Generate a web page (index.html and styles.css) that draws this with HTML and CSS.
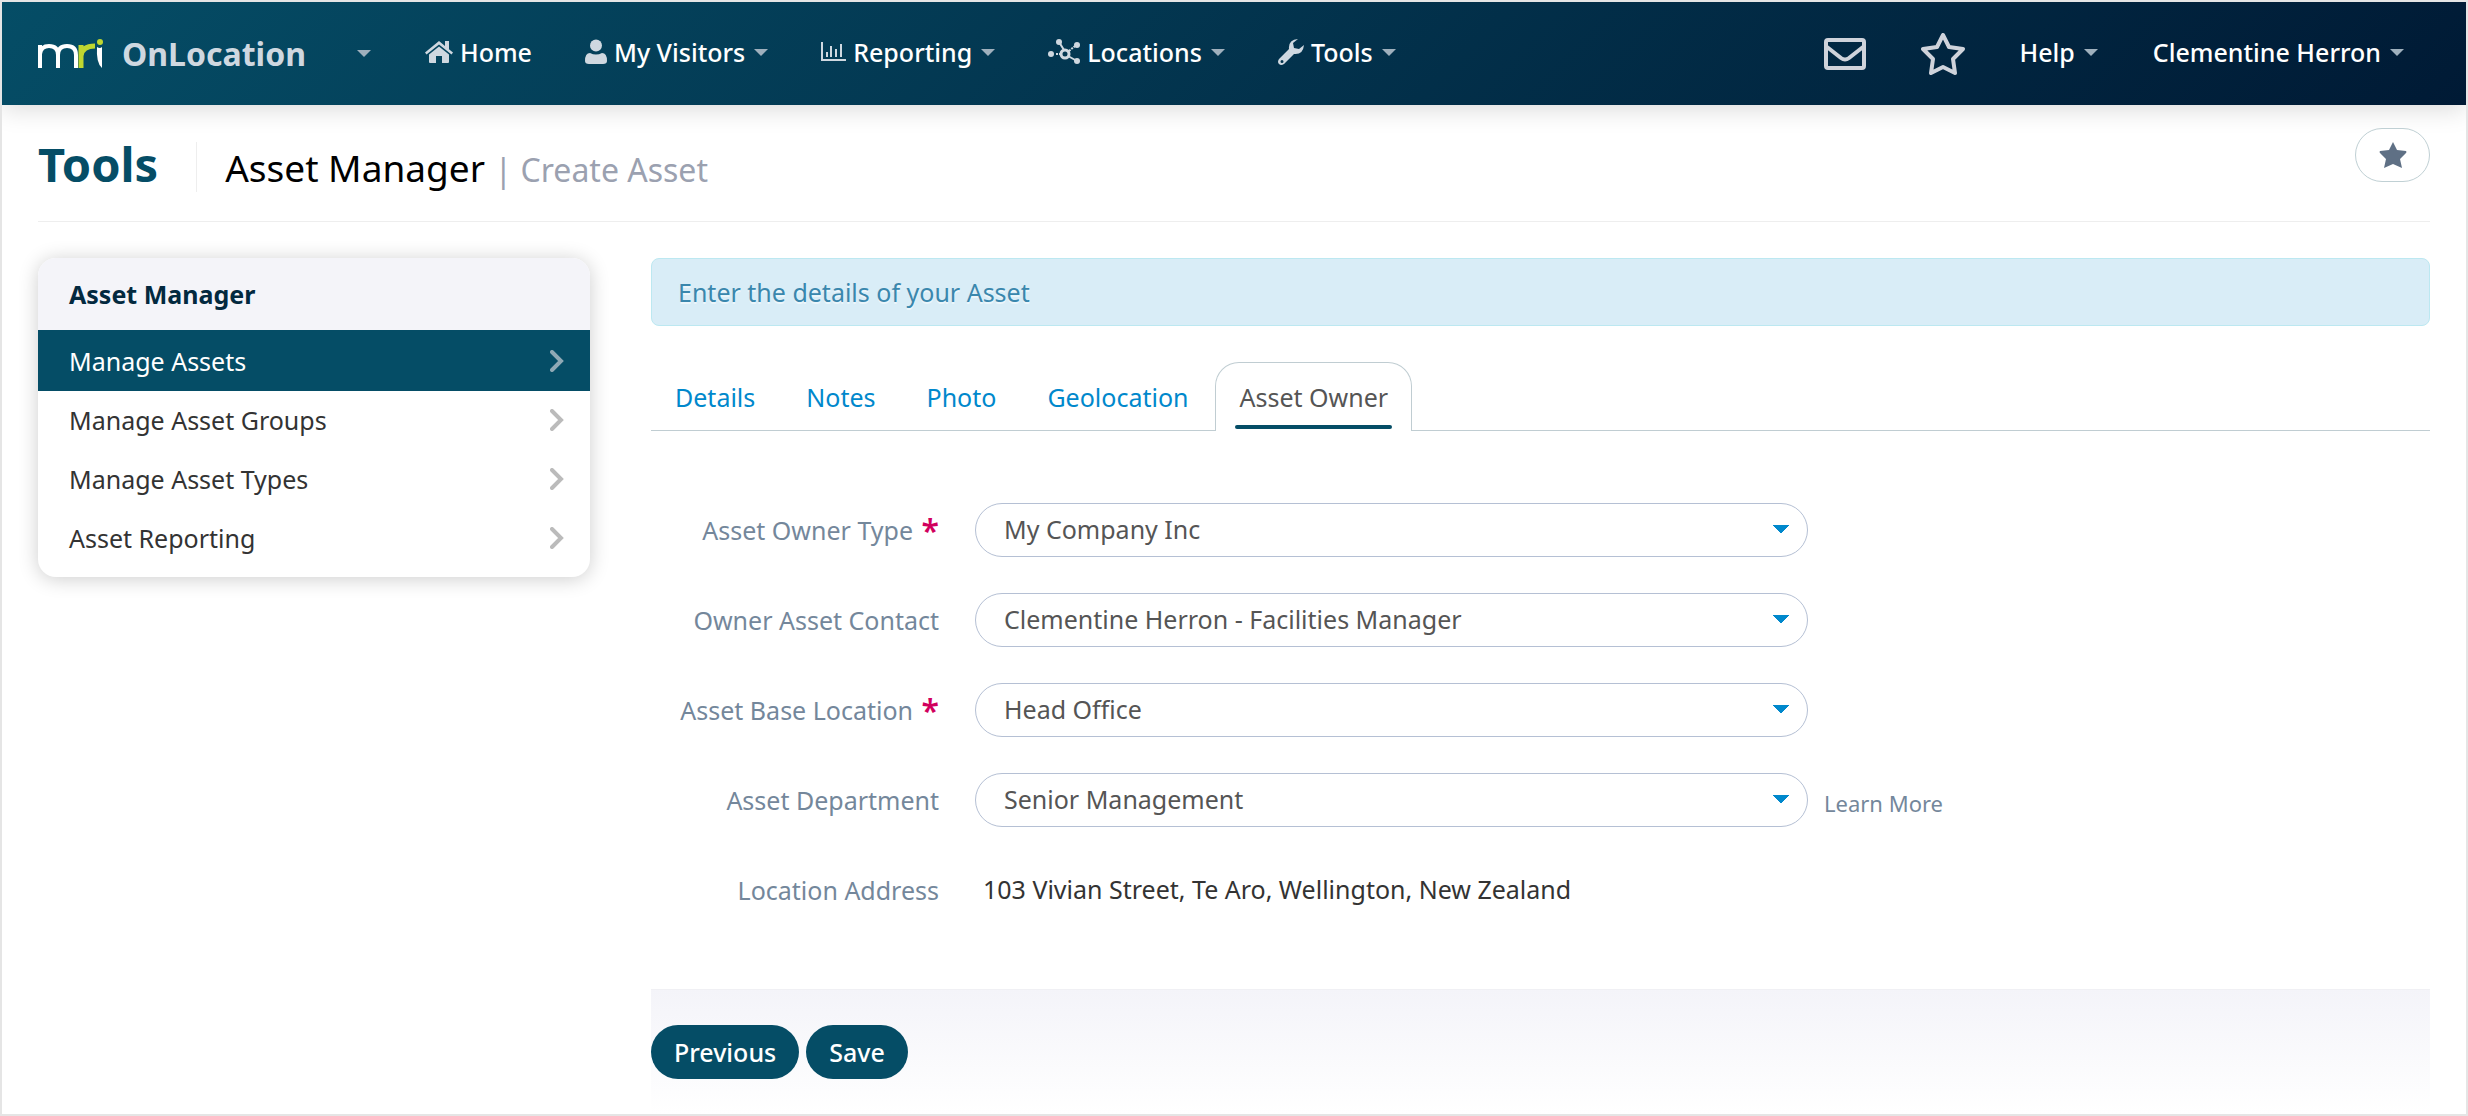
FILE: index.html
```html
<!DOCTYPE html>
<html lang="en">
<head>
  <meta charset="UTF-8">
  <meta name="viewport" content="width=device-width, initial-scale=1.0">
  <title>Asset Manager - Create Asset</title>
  <link rel="stylesheet" href="styles.css">
</head>
<body>
  <!-- Top navigation -->
  <header class="navbar">
    <a href="#" class="brand">
      <svg class="logo" viewBox="0 0 66 30" aria-label="mri">
        <path d="M2 29V6M2 29V15Q3 7 11 7Q20 7 20 16V29M20 16Q20 7 29 7Q38 7 38 16V29" fill="none" stroke="#fff" stroke-width="4"/>
        <path d="M43 29V6M43 29V17Q44 7 57 7" fill="none" stroke="#bfd730" stroke-width="5"/>
        <path d="M59 8Q62 10 64 8V29Q58 24 59 8z" fill="#fff"/>
        <circle cx="62" cy="3" r="3" fill="#bfd730"/>
      </svg>
      <span>OnLocation</span>
    </a>
    <button class="caret-button" aria-label="Switch product"><span class="caret"></span></button>
    <nav class="menu">
      <a href="#">
        <svg class="icon icon-home" viewBox="0 0 28 24"><path d="M14 1L0 12.500l1.500 2L14 4.500l12.500 10 1.500-2-4-3.300V1h-4v5zM14 6.500L4 14.500V22q0 1 1 1h6v-7h6v7h6q1 0 1-1v-7.500z"/></svg>
        Home
      </a>
      <a href="#">
        <svg class="icon" viewBox="0 0 22 26"><circle cx="11" cy="6.500" r="6"/><path d="M0 22q0-8 5-8 6 3 12 0 5 0 5 8 0 3-4 3H4q-4 0-4-3z"/></svg>
        My Visitors <span class="caret"></span>
      </a>
      <a href="#">
        <svg class="icon icon-chart" viewBox="0 0 25 20"><path d="M0 0h2v17h23v2H0zM5 10h2v5H5zM9 4h2v11H9zM14 7h2v8h-2zM19 2h2v13h-2z"/></svg>
        Reporting <span class="caret"></span>
      </a>
      <a href="#">
        <svg class="icon icon-hub" viewBox="0 0 32 26"><circle cx="17" cy="15" r="4" fill="none" stroke="#cfd8e0" stroke-width="3"/><circle cx="11" cy="3" r="3"/><circle cx="29" cy="6" r="3"/><circle cx="3" cy="15" r="3"/><circle cx="29" cy="22" r="3"/><path d="M11 3l5 8M20 17l9 5" stroke="#cfd8e0" stroke-width="2"/><path d="M8 15h5M21 12l6-5" stroke="#cfd8e0" stroke-width="2" stroke-dasharray="2 1"/></svg>
        Locations <span class="caret"></span>
      </a>
      <a href="#">
        <svg class="icon" viewBox="0 0 26 26"><path fill-rule="evenodd" d="M20 0q-10 1-9 10L1 20q-2 3 0 5 2 2 5 0L16 15q9 1 10-9l-5 4-5-1-1-5zM4 21a1 1 0 1 0 0 3 1 1 0 0 0 0-3z"/></svg>
        Tools <span class="caret"></span>
      </a>
    </nav>
    <div class="user-menu">
      <a href="#" aria-label="Messages">
        <svg class="icon-mail" viewBox="0 0 42 32"><rect x="2" y="2" width="38" height="28" rx="2"/><path d="M3 9l14 11q4 3 8 0L39 9"/></svg>
      </a>
      <a href="#" aria-label="Favourites">
        <svg class="icon-star" viewBox="0 0 44 42"><path d="M22 2l6 12 14 2-10 10 2 14-12-6-12 6 2-14L2 16l14-2z"/></svg>
      </a>
      <a href="#" class="user-link">Help <span class="caret"></span></a>
      <a href="#" class="user-link">Clementine Herron <span class="caret"></span></a>
    </div>
  </header>

  <div class="page">
    <div class="page-header">
      <h1>Tools</h1>
      <h2>Asset Manager <small>| Create Asset</small></h2>
      <button class="favourite" aria-label="Add to favourites">
        <svg viewBox="0 0 28 26"><path d="M14 0l4 8 9 1q1 1 0 2l-6 6 2 9-9-4-9 4 2-9-6-6q-1-1 0-2l9-1z"/></svg>
      </button>
    </div>

    <div class="columns">
      <!-- Side menu -->
      <aside class="sidebar">
        <h3>Asset Manager</h3>
        <a href="#" class="active">Manage Assets <svg viewBox="0 0 14 22"><path d="M2 2l9 9-9 9"/></svg></a>
        <a href="#">Manage Asset Groups <svg viewBox="0 0 14 22"><path d="M2 2l9 9-9 9"/></svg></a>
        <a href="#">Manage Asset Types <svg viewBox="0 0 14 22"><path d="M2 2l9 9-9 9"/></svg></a>
        <a href="#">Asset Reporting <svg viewBox="0 0 14 22"><path d="M2 2l9 9-9 9"/></svg></a>
      </aside>

      <main class="content">
        <div class="alert">Enter the details of your Asset</div>

        <nav class="tabs">
          <a href="#">Details</a>
          <a href="#">Notes</a>
          <a href="#">Photo</a>
          <a href="#">Geolocation</a>
          <a href="#" class="active">Asset Owner</a>
        </nav>

        <form>
          <div class="form-group">
            <label for="owner-type">Asset Owner Type <span class="required">*</span></label>
            <select id="owner-type"><option>My Company Inc</option></select>
          </div>
          <div class="form-group">
            <label for="contact">Owner Asset Contact</label>
            <select id="contact"><option>Clementine Herron - Facilities Manager</option></select>
          </div>
          <div class="form-group">
            <label for="location">Asset Base Location <span class="required">*</span></label>
            <select id="location"><option>Head Office</option></select>
          </div>
          <div class="form-group">
            <label for="department">Asset Department</label>
            <select id="department"><option>Senior Management</option></select>
            <a href="#" class="learn-more">Learn More</a>
          </div>
          <div class="form-group">
            <label for="address">Location Address</label>
            <output id="address">103 Vivian Street, Te Aro, Wellington, New Zealand</output>
          </div>
          <div class="form-actions">
            <button type="button">Previous</button>
            <button type="submit">Save</button>
          </div>
        </form>
      </main>
    </div>
  </div>
</body>
</html>
```
FILE: styles.css
```css
* {
  box-sizing: border-box;
}
body {
  margin: 0;
  min-height: 100vh;
  border: 2px solid #e5e5e5;
  background-color: #fff;
  font-family: "Noto Sans", sans-serif;
  font-size: 25px;
  line-height: 36px;
  color: #333;
}
a {
  text-decoration: none;
}
button, select {
  font-family: inherit;
  font-size: inherit;
}

/* navbar */
.navbar {
  display: flex;
  align-items: center;
  height: 103px;
  padding: 0 62px 0 36px;
  background: linear-gradient(135deg, #054d66, #001a35);
  box-shadow: 0 4px 24px rgba(0, 0, 0, 0.15);
}
.navbar a {
  display: flex;
  align-items: center;
  color: #fff;
  font-weight: 500;
  white-space: nowrap;
}
.navbar .brand {
  gap: 18px;
  color: #cfd8e0;
  font-size: 32px;
  font-weight: bold;
}
.logo {
  width: 66px;
  height: 30px;
}
.caret {
  margin-left: 9px;
  border: 7px solid transparent;
  border-top: 7px solid #9fb0bd;
  border-bottom: 0;
}
.caret-button {
  display: flex;
  margin: 0 54px 0 42px;
  padding: 0;
  border: none;
  background: none;
}
.menu {
  display: flex;
  gap: 53px;
  padding-bottom: 3px;
}
.icon {
  height: 26px;
  margin-right: 7px;
  fill: #cfd8e0;
}
.icon-home {
  height: 24px;
}
.icon-chart {
  height: 20px;
}
.user-menu {
  display: flex;
  align-items: center;
  gap: 55px;
  margin-left: auto;
}
.user-link {
  padding-bottom: 3px;
}
.icon-mail, .icon-star {
  height: 32px;
  fill: none;
  stroke: #cfd3db;
  stroke-width: 4;
  stroke-linejoin: round;
}
.icon-star {
  height: 42px;
}

/* page title */
.page {
  padding: 0 36px;
}
.page-header {
  display: flex;
  align-items: baseline;
  height: 117px;
  padding-top: 23px;
  border-bottom: 1px solid #eee;
}
h1 {
  margin: 14px 0 0;
  padding: 0 38px 6px 0;
  border-right: 1px solid #eee;
  color: #054d66;
  font-size: 47px;
  line-height: 44px;
}
h2 {
  margin: 0 0 0 28px;
  color: #000;
  font-size: 37px;
  font-weight: normal;
}
h2 small {
  color: #9ba1b0;
  font-size: 32px;
}
.favourite {
  display: flex;
  align-items: center;
  align-self: flex-start;
  justify-content: center;
  width: 75px;
  height: 54px;
  margin-left: auto;
  border: 1px solid #c0d0d4;
  border-radius: 27px;
  background-color: #fff;
}
.favourite svg {
  width: 28px;
  fill: #5f7085;
}

/* columns */
.columns {
  display: flex;
  align-items: flex-start;
  gap: 61px;
  padding-top: 36px;
}
.sidebar {
  width: 552px;
  padding-bottom: 9px;
  border-radius: 18px;
  overflow: hidden;
  box-shadow: 0 2px 20px rgba(0, 0, 0, 0.2);
}
.sidebar h3 {
  margin: 0;
  padding: 18px 31px;
  background-color: #f4f4f9;
  color: #03293f;
  font-size: 25px;
  font-weight: bold;
}
.sidebar a {
  display: flex;
  align-items: center;
  justify-content: space-between;
  height: 59px;
  padding: 0 26px 2px 31px;
  color: #333;
}
.sidebar .active {
  height: 61px;
  padding-bottom: 0;
  background-color: #054d66;
  color: #fff;
}
.sidebar svg {
  width: 14px;
  height: 22px;
  fill: none;
  stroke: #bbb;
  stroke-width: 4;
  stroke-linecap: round;
}
.sidebar .active svg {
  stroke: #8fa9b5;
}
.content {
  flex: 1;
}
.alert {
  padding: 15px 26px;
  border: 1px solid #bce8f1;
  border-radius: 8px;
  background-color: #d9edf7;
  color: #3a87ad;
  text-shadow: 0 2px 0 rgba(255, 255, 255, 0.5);
}
.tabs {
  display: flex;
  gap: 3px;
  margin: 36px 0 72px;
  border-bottom: 1px solid #c0cdd2;
}
.tabs a {
  height: 69px;
  margin-bottom: -1px;
  padding: 16px 23px 0;
  border: 1px solid transparent;
  border-bottom: 0;
  border-radius: 24px 24px 0 0;
  color: #0088cc;
}
.tabs .active {
  border-color: #c0cdd2;
  background-color: #fff;
  color: #555;
}
.tabs .active::after {
  content: "";
  display: block;
  height: 4px;
  margin: 10px -4px 0;
  border-radius: 2px;
  background-color: #054d66;
}

/* form */
.form-group {
  display: flex;
  align-items: center;
  height: 54px;
  margin-bottom: 36px;
}
label {
  width: 288px;
  margin-right: 36px;
  color: #74879b;
  text-align: right;
}
.required {
  margin-left: 2px;
  color: #d1005d;
  font-size: 32px;
  font-weight: 600;
  line-height: 26px;
  vertical-align: -3px;
}
select {
  width: 833px;
  height: 54px;
  padding: 0 28px 2px;
  border: 1px solid #b5c0d4;
  border-radius: 27px;
  appearance: none;
  background-color: #fff;
  /* two halves of the drop-down arrow */
  background-image: linear-gradient(to top right, transparent 50%, #0088cc 50%), linear-gradient(to top left, transparent 50%, #0088cc 50%);
  background-position: right 26px top 21px, right 18px top 21px;
  background-size: 8px 9px;
  background-repeat: no-repeat;
  color: #555;
}
output {
  padding: 0 0 2px 8px;
}
.learn-more {
  margin-left: 16px;
  padding-top: 6px;
  color: #74879b;
  font-size: 22px;
}
.form-actions {
  display: flex;
  gap: 7px;
  margin-top: 72px;
  padding: 35px 0;
  border-top: 1px solid #f0f0f4;
  background: linear-gradient(#f4f4f9, #fff);
}
.form-actions button {
  height: 54px;
  padding: 0 23px;
  border: none;
  border-radius: 27px;
  background-color: #054d66;
  color: #fff;
  font-weight: 500;
}
```
